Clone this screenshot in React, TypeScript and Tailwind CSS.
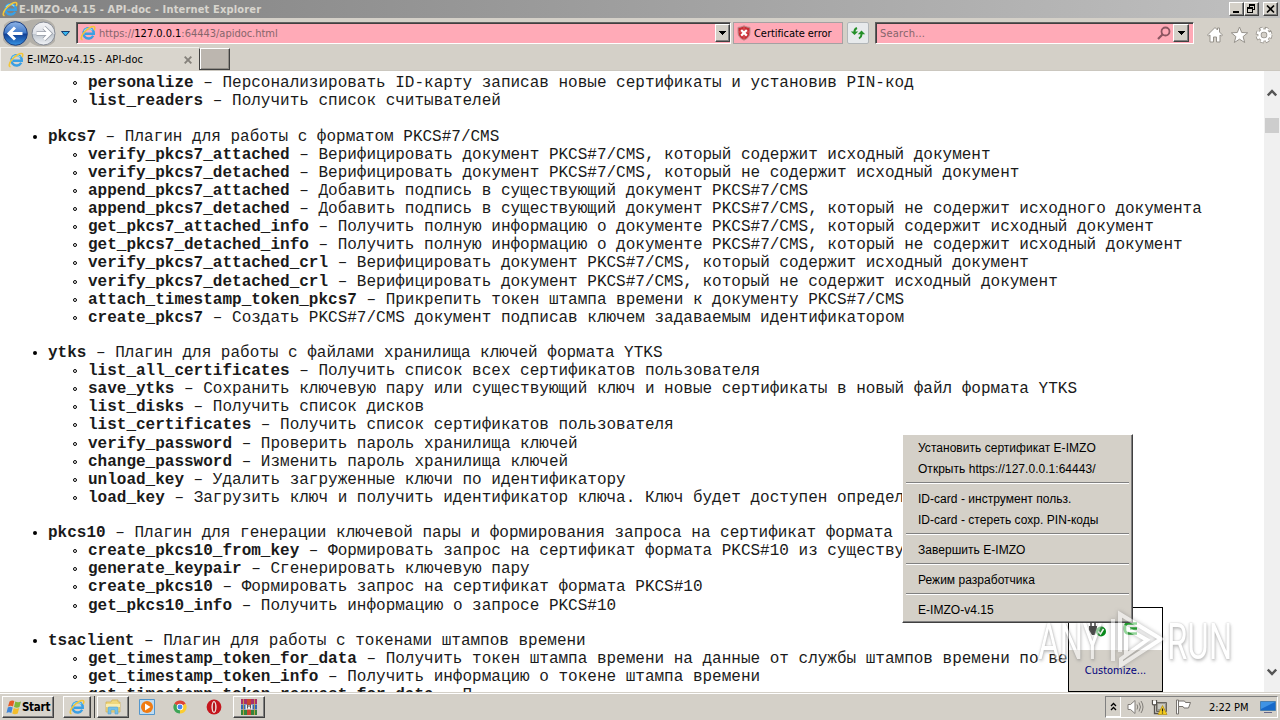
import React from 'react';
import clsx from 'clsx';

type Entry = { name: string; text: string };
type Group = Entry & { items: Entry[] };

const plugins: Group[] = [
  {
    name: 'pkcs7',
    text: 'Плагин для работы с форматом PKCS#7/CMS',
    items: [
      { name: 'verify_pkcs7_attached', text: 'Верифицировать документ PKCS#7/CMS, который содержит исходный документ' },
      { name: 'verify_pkcs7_detached', text: 'Верифицировать документ PKCS#7/CMS, который не содержит исходный документ' },
      { name: 'append_pkcs7_attached', text: 'Добавить подпись в существующий документ PKCS#7/CMS' },
      { name: 'append_pkcs7_detached', text: 'Добавить подпись в существующий документ PKCS#7/CMS, который не содержит исходного документа' },
      { name: 'get_pkcs7_attached_info', text: 'Получить полную информацию о документе PKCS#7/CMS, который содержит исходный документ' },
      { name: 'get_pkcs7_detached_info', text: 'Получить полную информацию о документе PKCS#7/CMS, который не содержит исходный документ' },
      { name: 'verify_pkcs7_attached_crl', text: 'Верифицировать документ PKCS#7/CMS, который содержит исходный документ' },
      { name: 'verify_pkcs7_detached_crl', text: 'Верифицировать документ PKCS#7/CMS, который не содержит исходный документ' },
      { name: 'attach_timestamp_token_pkcs7', text: 'Прикрепить токен штампа времени к документу PKCS#7/CMS' },
      { name: 'create_pkcs7', text: 'Создать PKCS#7/CMS документ подписав ключем задаваемым идентификатором' },
    ],
  },
  {
    name: 'ytks',
    text: 'Плагин для работы с файлами хранилища ключей формата YTKS',
    items: [
      { name: 'list_all_certificates', text: 'Получить список всех сертификатов пользователя' },
      { name: 'save_ytks', text: 'Сохранить ключевую пару или существующий ключ и новые сертификаты в новый файл формата YTKS' },
      { name: 'list_disks', text: 'Получить список дисков' },
      { name: 'list_certificates', text: 'Получить список сертификатов пользователя' },
      { name: 'verify_password', text: 'Проверить пароль хранилища ключей' },
      { name: 'change_password', text: 'Изменить пароль хранилища ключей' },
      { name: 'unload_key', text: 'Удалить загруженные ключи по идентификатору' },
      { name: 'load_key', text: 'Загрузить ключ и получить идентификатор ключа. Ключ будет доступен определ' },
    ],
  },
  {
    name: 'pkcs10',
    text: 'Плагин для генерации ключевой пары и формирования запроса на сертификат формата',
    items: [
      { name: 'create_pkcs10_from_key', text: 'Формировать запрос на сертификат формата PKCS#10 из существу' },
      { name: 'generate_keypair', text: 'Сгенерировать ключевую пару' },
      { name: 'create_pkcs10', text: 'Формировать запрос на сертификат формата PKCS#10' },
      { name: 'get_pkcs10_info', text: 'Получить информацию о запросе PKCS#10' },
    ],
  },
  {
    name: 'tsaclient',
    text: 'Плагин для работы с токенами штампов времени',
    items: [
      { name: 'get_timestamp_token_for_data', text: 'Получить токен штампа времени на данные от службы штампов времени по ве' },
      { name: 'get_timestamp_token_info', text: 'Получить информацию о токене штампа времени' },
      { name: 'get_timestamp_token_request_for_data', text: 'П' },
    ],
  },
];

const cardItems: Entry[] = [
  { name: 'personalize', text: 'Персонализировать ID-карту записав новые сертификаты и установив PIN-код' },
  { name: 'list_readers', text: 'Получить список считывателей' },
];

const menuGroups = [
  ['Установить сертификат E-IMZO', 'Открыть https://127.0.0.1:64443/'],
  ['ID-card - инструмент польз.', 'ID-card - стереть сохр. PIN-коды'],
  ['Завершить E-IMZO'],
  ['Режим разработчика'],
  ['E-IMZO-v4.15'],
];

const raised = 'border border-t-white border-l-white border-r-[#404040] border-b-[#404040] shadow-[inset_-1px_-1px_0_#808080]';

const IeIcon: React.FC<{ className?: string }> = ({ className }) => (
  <svg viewBox="0 0 16 16" className={className} fill="none">
    <path d="M13.200 10.800A5.200 5.200 0 1 1 13.800 8.700H5" stroke="#3a9fe3" strokeWidth="2.400" />
    <path d="M12.300 5.400A5 5 0 0 0 4 6" stroke="#8adcfb" strokeWidth="1.200" />
    <path d="M2.600 14.600C.4 14.600.8 11.400 4 7.600 7.400 3.600 12.400.6 14.200 1.700c1 .7.600 2.200-.1 3.500" stroke="#f2c63a" strokeWidth="1.500" />
  </svg>
);

const DropArrow = () => (
  <svg viewBox="0 0 7 4" className="w-[7px] h-[4px]" shapeRendering="crispEdges"><path d="M0 0h7L3.500 4z" /></svg>
);

const WindowButton: React.FC<{ children: React.ReactNode }> = ({ children }) => (
  <div className={clsx('w-[15px] h-[14px] bg-[#d4d0c8] flex items-center justify-center', raised)}>{children}</div>
);

const TitleBar = () => (
  <div className="h-[18px] flex items-center bg-linear-to-r from-[#808080] to-[#c0c0c0] pl-[2px] pr-[2px]">
    <IeIcon className="w-4 h-4" />
    <span className="ml-[1px] mt-[1px] font-bold text-[11px] leading-[17px] tracking-[0.16px] text-[#d8d5ce] whitespace-nowrap">E-IMZO-v4.15 - API-doc - Internet Explorer</span>
    <div className="ml-auto flex">
      <WindowButton>
        <svg viewBox="0 0 11 10" className="w-[11px] h-[10px]"><path d="M2 7h6v2H2z" /></svg>
      </WindowButton>
      <WindowButton>
        <svg viewBox="0 0 11 10" className="w-[11px] h-[10px]" fill="none" stroke="#000" shapeRendering="crispEdges">
          <path d="M3.500 0v3M8.500 1v5M7 5.500h2M1.500 3v6M6.500 4v5M1 8.500h6" />
          <path d="M3 1h6M1 4h6" strokeWidth="2" />
        </svg>
      </WindowButton>
      <div className="w-[4px]" />
      <WindowButton>
        <svg viewBox="0 0 11 10" className="w-[11px] h-[10px]" stroke="#000" strokeWidth="1.700"><path d="M2 1.500l7 7M9 1.500l-7 7" /></svg>
      </WindowButton>
    </div>
  </div>
);

const NavButtons = () => (
  <svg viewBox="0 0 74 29" className="w-[74px] h-[29px] shrink-0">
    <defs>
      <linearGradient id="back" x1="0" y1="0" x2="0" y2="1">
        <stop offset="0" stopColor="#8fb4e6" /><stop offset=".48" stopColor="#3f78c8" /><stop offset=".52" stopColor="#123f94" /><stop offset="1" stopColor="#3794e4" />
      </linearGradient>
      <linearGradient id="fwd" x1="0" y1="0" x2="0" y2="1">
        <stop offset="0" stopColor="#f4f4f6" /><stop offset=".5" stopColor="#dcdfe5" /><stop offset=".52" stopColor="#bcc3cc" /><stop offset="1" stopColor="#f2f4f7" />
      </linearGradient>
    </defs>
    <path d="M4 7Q9 1 16 2.500q7 2 13 0 4-1.500 14-1.500 9 1 12 8v14q-4 6-12 5-8 1-13-4-4 6-14 5Q6 28 3 22z" fill="#b3b0a9" />
    <circle cx="15.500" cy="15.500" r="11.800" fill="url(#back)" stroke="#1b3f82" />
    <circle cx="43.500" cy="15.500" r="11.500" fill="url(#fwd)" stroke="#868b95" />
    <path d="M22.500 15.500H9.500M15 9.500l-6 6 6 6" fill="none" stroke="#fff" strokeWidth="3" />
    <path d="M36.500 15.500h13M44 9.500l6 6-6 6" fill="none" stroke="#999ea8" strokeWidth="4.400" />
    <path d="M36.500 15.500h13M44 9.500l6 6-6 6" fill="none" stroke="#fff" strokeWidth="2.800" />
    <path d="M61.500 13.500h8l-4 4.500z" fill="#36b7f0" stroke="#143c70" />
  </svg>
);

const ToolIcons = () => (
  <svg viewBox="0 0 72 18" className="w-[72px] h-[18px] ml-[12px] mt-[8px]" fill="#fff" stroke="#96928b" strokeWidth="1">
    <path d="M1.500 9L9 1.500l2.500 2.500V2h2v4l3 3-1 1-1.500-1v7h-3.500v-5h-3v5H4V9L2.500 10z" />
    <path d="M33.500 1l2.200 5.500 6 .3-4.600 3.800 1.600 5.900-5.200-3.300-5.200 3.300 1.600-5.900-4.600-3.800 6-.3z" />
    <g fill="none">
      <circle cx="58" cy="9" r="6.500" stroke="#96928b" strokeWidth="3.800" strokeDasharray="3.200 1.900" />
      <circle cx="58" cy="9" r="4.500" stroke="#96928b" strokeWidth="4" />
      <circle cx="58" cy="9" r="6.300" stroke="#fff" strokeWidth="2.600" strokeDasharray="2.600 2.500" />
      <circle cx="58" cy="9" r="4.500" stroke="#fff" strokeWidth="2.400" />
    </g>
  </svg>
);

const sunken = 'bg-[#ffaab7] border border-t-[#606060] border-l-[#606060] border-b-white border-r-white shadow-[inset_1px_1px_0_#404040]';

const Toolbar = () => (
  <div className="h-[29px] flex items-start bg-[#d4d0c8] text-[11px]">
    <NavButtons />
    <div className={clsx('ml-[2px] mt-[4px] w-[655px] h-[22px] flex items-center pl-[3px]', sunken)}>
      <IeIcon className="w-4 h-4 shrink-0" />
      <span className="ml-[3px] mt-[2px] text-[#85656b] whitespace-nowrap tracking-[-0.02px]">https://<span className="text-black">127.0.0.1</span>:64443/apidoc.html</span>
      <div className={clsx('ml-auto w-[15px] h-[18px] bg-[#d4d0c8] flex items-center justify-center', raised)}><DropArrow /></div>
    </div>
    <div className="ml-[2px] mt-[4px] w-[110px] h-[22px] flex items-center pl-[3px] bg-[#ffaab7] border border-[#a5a0a2]">
      <svg viewBox="0 0 14 16" className="w-[14px] h-[16px] shrink-0">
        <path d="M7 .8q3 1.600 6 1.600v5Q13 12.500 7 15.200 1 12.500 1 7.400v-5q3 0 6-1.600z" fill="#c92c34" stroke="#b79292" />
        <path d="M7 1v14M1 7h12" stroke="#e4747a" strokeWidth=".7" />
        <path d="M4.200 5l5.600 5.600M9.800 5l-5.600 5.600" stroke="#fff" strokeWidth="2.200" />
      </svg>
      <span className="ml-[3px] mt-[2px] whitespace-nowrap tracking-[-0.06px]">Certificate error</span>
    </div>
    <div className="ml-[4px] mt-[4px] w-[22px] h-[22px] rounded-[2px] bg-[#e7eaec] border border-[#b2b6b8] flex items-center justify-center">
      <svg viewBox="0 0 16 14" className="w-4 h-[14px]" fill="none" stroke="#249028" strokeWidth="2">
        <path d="M4.500 7V5.500Q4.500 3 7 2M11.500 7v1.500q0 2.500-2.500 4" />
        <path d="M.8 5.500h7.400L4.500 9zM7.800 8.200h7.400L11.500 4.500z" fill="#249028" stroke="none" />
      </svg>
    </div>
    <div className={clsx('ml-[6px] mt-[4px] w-[319px] h-[22px] flex items-center pl-[4px]', sunken)}>
      <span className="mt-[2px] text-[#85656b] tracking-[0.2px]">Search...</span>
      <svg viewBox="0 0 14 14" className="w-[14px] h-[14px] ml-auto mr-[2px]" fill="none" stroke="#8b5560" strokeWidth="1.800">
        <circle cx="8.500" cy="5.500" r="4" /><path d="M5.500 8.500L1 13" strokeWidth="2.200" />
      </svg>
      <div className={clsx('mr-[4px] w-[16px] h-[18px] bg-[#d4d0c8] flex items-center justify-center', raised)}><DropArrow /></div>
    </div>
    <ToolIcons />
  </div>
);

const TabBar = () => (
  <div className="h-[24px] flex bg-[#d4d0c8] border-b border-[#cbc7bf] text-[11px]">
    <div className="w-[199px] h-[24px] flex items-center pl-[7px] pr-[7px] bg-[#d9d5cd] border-t border-l border-[#f2f0ec]">
      <IeIcon className="w-4 h-4" />
      <span className="ml-[3px] mt-[2px] whitespace-nowrap tracking-[0.09px]">E-IMZO-v4.15 - API-doc</span>
      <svg viewBox="0 0 8 8" className="w-[8px] h-[8px] ml-auto" stroke="#85817b" strokeWidth="1.900"><path d="M.7.700l6.600 6.600M7.300.7L.7 7.300" /></svg>
    </div>
    <div className="mt-[1px] w-[31px] h-[22px] bg-[#bcb6af] border border-[#404040] border-t-white shadow-[inset_1px_0_0_#fff,inset_-1px_-1px_0_#908c86]" />
  </div>
);

const SubItem: React.FC<Entry> = ({ name, text }) => (
  <li className="flex items-center h-[18.125px] pl-[73px] whitespace-pre">
    <span className="w-[4px] h-[4px] mr-[11px] rounded-full border border-black shrink-0" />
    <span><b>{name}</b> – {text}</span>
  </li>
);

const ApiDoc = () => (
  <div className="h-[621px] flex overflow-hidden bg-white">
    <div className="w-[1264px] overflow-hidden text-[16px] leading-[18.125px] font-['Liberation_Mono',monospace] text-[#1a1a1a]">
      <ul className="mt-[3.250px]">
        {cardItems.map((item) => <SubItem key={item.name} {...item} />)}
      </ul>
      {plugins.map((group) => (
        <section key={group.name} className="mt-[17px]">
          <div className="flex items-center h-[18.125px] pl-[33px] whitespace-pre">
            <span className="w-[4px] h-[4px] mr-[11px] rounded-full bg-black shrink-0" />
            <span><b>{group.name}</b> – {group.text}</span>
          </div>
          <ul>{group.items.map((item) => <SubItem key={item.name} {...item} />)}</ul>
        </section>
      ))}
    </div>
    <div className="w-[16px] bg-[#f0f0f0] flex flex-col items-center pt-[18px] pb-[16px]">
      <svg viewBox="0 0 10 8" className="w-[10px] h-[8px]" fill="none" stroke="#555" strokeWidth="2.400"><path d="M.8 6.500L5 2l4.200 4.500" /></svg>
      <div className="mt-[21px] w-[14px] h-[15px] bg-[#cdcdcd]" />
      <svg viewBox="0 0 10 8" className="w-[10px] h-[8px] mt-auto" fill="none" stroke="#555" strokeWidth="2.400"><path d="M.8 1.500L5 6l4.200-4.500" /></svg>
    </div>
  </div>
);

const ContextMenu = () => (
  <div className={clsx("absolute left-[902px] top-[434px] w-[231px] h-[189px] bg-[#d4d0c8] py-[2px] px-[3px] font-['Liberation_Sans',sans-serif] text-[12px]", raised)}>
    {menuGroups.map((group, i) => (
      <React.Fragment key={i}>
        {i > 0 && <div className="h-[9px] pt-[3px]"><div className="h-[2px] border-t border-t-[#808080] border-b border-b-white" /></div>}
        {group.map((label) => <div key={label} className="h-[21px] leading-[23px] pl-[12px] whitespace-nowrap tracking-[0.03px]">{label}</div>)}
      </React.Fragment>
    ))}
  </div>
);

const TrayPopup = () => (
  <div className="absolute left-[1068px] top-[607px] w-[95px] h-[85px] border border-black bg-white flex flex-col">
    <div className="h-[42px] flex pt-[14px] pl-[20px] gap-[16px]">
      <svg viewBox="0 0 18 17" className="w-[18px] h-[17px]">
        <path d="M2 1v4M6 1v4" stroke="#444" strokeWidth="1.500" />
        <path d="M0 4h8v4l-2 5H3L0 8z" fill="#484848" />
        <circle cx="12" cy="9.500" r="5" fill="#078a1a" />
        <path d="M9.500 9.500l2 2.500 3-5" stroke="#fff" strokeWidth="1.500" fill="none" />
      </svg>
      <svg viewBox="0 0 16 16" className="w-4 h-4" fill="none" stroke="#12a020" strokeWidth="3">
        <path d="M14 1.500H5Q2 1.500 2 5v2.500q0 4 4 4h8M7 6.500h7" strokeWidth="2.600" />
      </svg>
    </div>
    <div className="flex-1 bg-[#d4d0c8] pt-[13px] text-center leading-[16px] text-[11px] text-[#00007b]">Customize...</div>
  </div>
);

const Watermark = () => (
  <div className="absolute left-[1038px] top-[610px] w-[200px] h-[60px] opacity-55 font-[Roboto,sans-serif] text-[50px] leading-[60px] text-white [text-shadow:0_0_2px_#777,1px_2px_4px_#888]">
    <span className="absolute left-0 top-[2px] origin-left scale-x-[0.66]">ANY</span>
    <svg viewBox="0 0 56 60" className="absolute left-[70px] top-0 w-[56px] h-[60px] drop-shadow-[0_0_2px_#777]" fill="none" stroke="#fff" strokeWidth="4">
      <path d="M12 42V4L53 29 13 55V49L39 30 18 18V45" />
      <path d="M5 9v42" />
    </svg>
    <span className="absolute left-[129px] top-[2px] origin-left scale-x-[0.66]">RUN</span>
  </div>
);

const TaskButton: React.FC<{ className?: string; children: React.ReactNode }> = ({ className, children }) => (
  <div className={clsx('h-[22px] bg-[#d8d4cc] flex items-center justify-center', raised, className)}>{children}</div>
);

const Taskbar = () => (
  <div className="h-[28px] bg-[#d4d0c8] border-t border-[#d4d0c8] shadow-[inset_0_1px_0_#fff] flex items-start pt-[3px] pl-[2px] pr-[2px]">
    <TaskButton className="w-[52px]">
      <svg viewBox="0 0 16 16" className="w-[16px] h-[16px]">
        <path d="M3.500 2.500Q6 .8 8.300 2L7 7.500Q4.500 6 2 7.500z" fill="#e65b26" />
        <path d="M9.300 2.500Q12 4 15 2.500L13.500 8Q11 9.500 8 8z" fill="#7fb73a" />
        <path d="M1.800 8.500Q4 7.200 6.700 8.500L5.300 14Q3 12.500.5 14z" fill="#3f86d8" />
        <path d="M7.700 9Q10.500 10.500 13.200 9L11.700 14.500Q9 16 6.300 14.500z" fill="#f3bd2b" />
      </svg>
      <span className="mt-[1px] font-bold text-[11.500px] tracking-[-0.25px]">Start</span>
    </TaskButton>
    <TaskButton className="ml-[9px] w-[28px]"><IeIcon className="w-4 h-4" /></TaskButton>
    <div className="w-[4px] h-[22px] border-r border-[#404040] bg-[#c9c5bd]" />
    <TaskButton className="ml-[2px] w-[32px]">
      <svg viewBox="0 0 18 16" className="w-[18px] h-[16px]">
        <path d="M2 3h5l1-2h6v2h2v10H2z" fill="#f0d77c" stroke="#cfae52" strokeWidth=".7" />
        <path d="M2 5h14v3H2z" fill="#faedb0" />
        <path d="M4 15V9q0-1 1-1h8q1 0 1 1v6h-3v-4H7v4z" fill="#76c0e8" stroke="#4d9bc8" strokeWidth=".5" />
      </svg>
    </TaskButton>
    <svg viewBox="0 0 16 16" className="w-4 h-4 ml-[10px] mt-[3px]">
      <path d="M.5.5h15v15H.500z" fill="#bfdcf2" stroke="#5396cc" />
      <circle cx="8" cy="8" r="6" fill="#f07b12" /><path d="M6 4.500L11.500 8 6 11.500z" fill="#fff" />
    </svg>
    <svg viewBox="0 0 16 16" className="w-[14px] h-[14px] ml-[18px] mt-[4px]">
      <path d="M8 8L1.500 4.200A7.500 7.500 0 0 1 14.500 4.200z" fill="#de4436" />
      <path d="M8 8L1.500 4.200A7.500 7.500 0 0 0 8 15.500z" fill="#3da557" />
      <path d="M8 8L14.500 4.200A7.500 7.500 0 0 1 8 15.500z" fill="#fbcd30" />
      <circle cx="8" cy="8" r="3.700" fill="#fff" /><circle cx="8" cy="8" r="2.800" fill="#4586ee" />
    </svg>
    <svg viewBox="0 0 16 16" className="w-4 h-4 ml-[19px] mt-[3px]">
      <circle cx="8" cy="8" r="7.400" fill="#c5161d" /><ellipse cx="8" cy="8" rx="2.600" ry="6" fill="#efe6e2" /><ellipse cx="8" cy="8" rx="1.200" ry="4.800" fill="#b3151b" />
    </svg>
    <TaskButton className="ml-[11px] w-[32px]">
      <svg viewBox="0 0 16 16" className="w-4 h-4">
        <path d="M0 0h16v5H0z" fill="#a8306b" /><path d="M0 5.500h16v5H0z" fill="#3566b5" /><path d="M0 11h16v5H0z" fill="#36843c" />
        <path d="M6 0h4v16H6z" fill="#c9452f" /><path d="M4.500 6h7v4.500h-7z" fill="#eee" /><path d="M6.500 6v3.500M8 6v2M9.500 6v3.500" stroke="#333" strokeWidth=".8" />
        <path d="M2.500 0v16M13.500 0v16" stroke="#dca83c" strokeWidth=".8" />
      </svg>
    </TaskButton>
    <div className="ml-auto w-[173px] h-[22px] flex items-center border border-t-[#808080] border-l-[#808080] border-b-white border-r-white">
      <div className="w-[15px] h-[20px] flex items-center justify-center border-r border-b border-white">
        <svg viewBox="0 0 7 9" className="w-[7px] h-[9px]" fill="none" stroke="#000" strokeWidth="1.300"><path d="M1 4l2.500-2.500L6 4M1 8l2.500-2.500L6 8" /></svg>
      </div>
      <svg viewBox="0 0 17 16" className="w-[17px] h-[16px] ml-[6px]" fill="#fff" stroke="#807d78">
        <path d="M1 5.500h2.500L8 1.500v13l-4.500-4H1z" />
        <path d="M10 5.500q1.500 2.500 0 5M12 3.500q3 4.500 0 9M14 2q4 6 0 12" fill="none" />
      </svg>
      <svg viewBox="0 0 17 16" className="w-[17px] h-[16px] ml-[7px]">
        <path d="M5.500 3.500h10v9h-10z" fill="#9a978f" stroke="#68655f" /><path d="M7 5h7v5H7z" fill="#c9c9c1" />
        <path d="M1.500 1v4q0 1 2 1t2-1V1M3.500 6v8.500h4" fill="none" stroke="#55524d" strokeWidth="1.300" />
        <path d="M2 2h3v3H2z" fill="#fff" />
        <path d="M11.500 6.500l4.500 9H7z" fill="#f5cd1e" stroke="#b18b10" strokeWidth=".7" /><path d="M11.500 9.500v3M11.500 13.500v1" stroke="#222" strokeWidth="1.200" />
      </svg>
      <svg viewBox="0 0 17 16" className="w-[17px] h-[16px] ml-[7px]" fill="#fff" stroke="#77736e">
        <path d="M1.500 1h2v14h-2z" /><path d="M3.500 2h6l1 1.500h5L13.500 9H9L8 7.500H3.500z" />
      </svg>
      <span className="ml-[17px] mt-[2px] text-[11px] tracking-[-0.05px] whitespace-nowrap">2:22 PM</span>
      <svg viewBox="0 0 16 14" className="w-4 h-[14px] ml-auto mr-[1px]">
        <path d="M.5 1.500h15v9H.500z" fill="#1769c9" stroke="#4a7fae" /><path d="M1 2h14L1 9z" fill="#3f93e4" /><path d="M4 12.500h8" stroke="#668" />
      </svg>
    </div>
  </div>
);

const App: React.FC = () => (
  <div className="relative w-[1280px] h-[720px] overflow-hidden bg-[#d4d0c8] text-black font-['DejaVu_Sans_Condensed','Noto_Sans',sans-serif]">
    <TitleBar />
    <Toolbar />
    <TabBar />
    <ApiDoc />
    <Taskbar />
    <TrayPopup />
    <ContextMenu />
    <Watermark />
  </div>
);

export default App;
